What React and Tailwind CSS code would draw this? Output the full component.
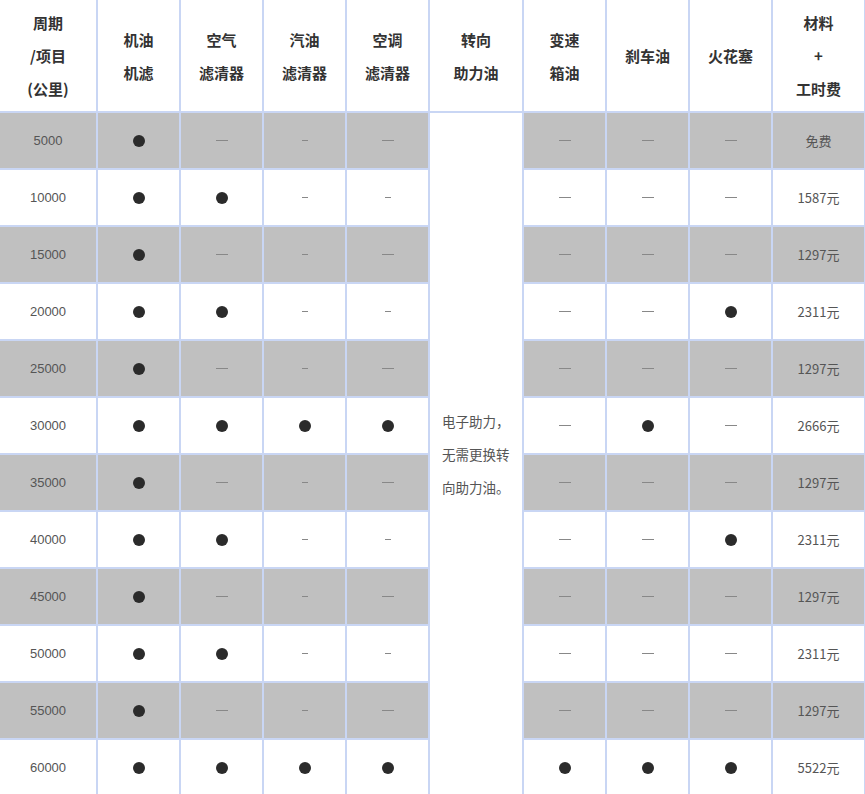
const COLS = ["w-[97px]", "w-[83px]", "w-[83px]", "w-[83px]", "w-[83px]", "w-[94px]", "w-[83px]", "w-[83px]", "w-[83px]", "w-[93px]"];

const HEADERS = [
  ["周期", "/项目", "(公里)"],
  ["机油", "机滤"],
  ["空气", "滤清器"],
  ["汽油", "滤清器"],
  ["空调", "滤清器"],
  ["转向", "助力油"],
  ["变速", "箱油"],
  ["刹车油"],
  ["火花塞"],
  ["材料", "+", "工时费"],
];

// 1 = dot, 0 = long dash, 2 = short dash
const ROWS = [
  { km: "5000", a: [1, 0, 2, 0], b: [0, 0, 0], price: "免费" },
  { km: "10000", a: [1, 1, 2, 2], b: [0, 0, 0], price: "1587元" },
  { km: "15000", a: [1, 0, 2, 0], b: [0, 0, 0], price: "1297元" },
  { km: "20000", a: [1, 1, 2, 2], b: [0, 0, 1], price: "2311元" },
  { km: "25000", a: [1, 0, 2, 0], b: [0, 0, 0], price: "1297元" },
  { km: "30000", a: [1, 1, 1, 1], b: [0, 1, 0], price: "2666元" },
  { km: "35000", a: [1, 0, 2, 0], b: [0, 0, 0], price: "1297元" },
  { km: "40000", a: [1, 1, 2, 2], b: [0, 0, 1], price: "2311元" },
  { km: "45000", a: [1, 0, 2, 0], b: [0, 0, 0], price: "1297元" },
  { km: "50000", a: [1, 1, 2, 2], b: [0, 0, 0], price: "2311元" },
  { km: "55000", a: [1, 0, 2, 0], b: [0, 0, 0], price: "1297元" },
  { km: "60000", a: [1, 1, 1, 1], b: [1, 1, 1], price: "5522元" },
];

function Mark({ v }) {
  let inner;
  if (v === 1) inner = <span className="w-[12px] h-[12px] rounded-full bg-[#2b2b2b]" />;
  else if (v === 2) inner = <span className="w-[6px] h-px bg-[#888]" />;
  else inner = <span className="w-[12px] h-px bg-[#888]" />;
  return <div className="flex items-center justify-center h-[12px]">{inner}</div>;
}

const cell = "border-r-2 border-b-2 border-[#c9d6f4] text-center align-middle";

export default function App() {
  return (
    <div className="w-[865px] h-[794px] overflow-hidden bg-white" style={{ fontFamily: '"Noto Sans CJK SC", "Liberation Sans", sans-serif' }}>
      <table className="table-fixed border-collapse w-[865px]">
        <colgroup>
          {COLS.map((c, i) => (
            <col key={i} className={c} />
          ))}
        </colgroup>
        <thead>
          <tr className="h-[112px]">
            {HEADERS.map((h, i) => (
              <th key={i} className={`${cell} ${i === 9 ? "border-r-0" : ""} font-bold text-[15px] leading-[33px] text-[#333]`}>
                {h.map((l, j) => (
                  <div key={j}>{l}</div>
                ))}
              </th>
            ))}
          </tr>
        </thead>
        <tbody>
          {ROWS.map((r, i) => {
            const bg = i % 2 === 0 ? "bg-[#c0c0c0]" : "bg-white";
            return (
              <tr key={r.km} className="h-[57px]">
                <td className={`${cell} ${bg} text-[13px] text-[#555]`} style={{ fontFamily: '"Liberation Sans", sans-serif' }}>{r.km}</td>
                {r.a.map((v, j) => (
                  <td key={j} className={`${cell} ${bg}`}>
                    <Mark v={v} />
                  </td>
                ))}
                {i === 0 && (
                  <td rowSpan={12} className="border-r-2 border-[#c9d6f4] bg-white align-middle text-left pl-[12px] pr-[8px] text-[13.5px] leading-[33px] text-[#555]">
                    电子助力，无需更换转向助力油。
                  </td>
                )}
                {r.b.map((v, j) => (
                  <td key={j} className={`${cell} ${bg}`}>
                    <Mark v={v} />
                  </td>
                ))}
                <td className={`${cell} ${bg} border-r-0 text-[13px] text-[#555]`}>{r.price}</td>
              </tr>
            );
          })}
        </tbody>
      </table>
    </div>
  );
}
